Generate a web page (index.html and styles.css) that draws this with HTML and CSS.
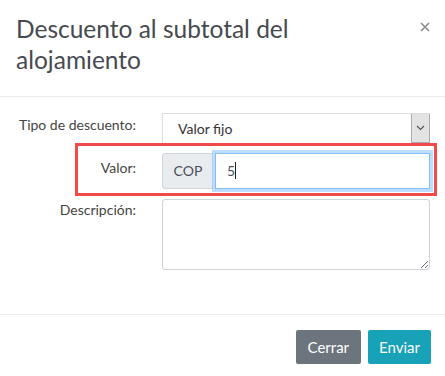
FILE: index.html
```html
<!DOCTYPE html>
<html lang="es">
<head>
    <meta charset="UTF-8">
    <meta name="viewport" content="width=device-width, initial-scale=1.0">
    <title>Descuento al subtotal del alojamiento</title>
    <link rel="stylesheet" href="styles.css">
</head>
<body>
    <div class="modal">
        <header class="modal-header">
            <h5 class="modal-title">Descuento al subtotal del alojamiento</h5>
            <button class="close" type="button" aria-label="Cerrar">
                <svg width="10" height="10" viewBox="0 0 10 10"><path d="M1 1L9 9M9 1L1 9" stroke="#8a8a8a" stroke-width="1.6"/></svg>
            </button>
        </header>
        <main class="modal-body">
            <div class="form-row">
                <label>Tipo de descuento:</label>
                <div class="select">
                    <span class="select-value">Valor fijo</span>
                    <span class="select-arrow">
                        <svg width="9" height="6" viewBox="0 0 9 6"><path d="M1 1L4.5 4.5L8 1" fill="none" stroke="#555" stroke-width="1.2"/></svg>
                    </span>
                </div>
            </div>
            <div class="form-row">
                <label class="label-mid">Valor:</label>
                <div class="input-group">
                    <span class="addon">COP</span>
                    <div class="form-control focused">5<span class="caret"></span></div>
                </div>
            </div>
            <div class="form-row">
                <label>Descripción:</label>
                <textarea class="textarea"></textarea>
            </div>
            <div class="highlight"></div>
        </main>
        <footer class="modal-footer">
            <button class="btn btn-secondary" type="button">Cerrar</button>
            <button class="btn btn-info" type="button">Enviar</button>
        </footer>
    </div>
</body>
</html>
```

FILE: styles.css
```css
body {
    margin: 0;
    font-family: Lato, "Open Sans", sans-serif;
    background: #fff;
    color: #495057;
}
.modal {
    width: 445px;
    height: 376px;
    background: #fff;
    display: flex;
    flex-direction: column;
}
.modal-header {
    display: flex;
    justify-content: space-between;
    align-items: flex-start;
    padding: 13px 14px 21px 16px;
    border-bottom: 1px solid #e9ecef;
}
.modal-title {
    margin: 0;
    width: 330px;
    font-size: 24.5px;
    font-weight: 400;
    line-height: 31px;
    color: #464a4f;
}
.close {
    border: 0;
    background: none;
    padding: 0;
    margin-top: 8px;
    width: 12px;
    height: 12px;
    line-height: 0;
}
.modal-body {
    position: relative;
    padding: 16px 15px 0 16px;
    height: 201px;
    display: flex;
    flex-direction: column;
    gap: 9px;
}
.form-row {
    display: grid;
    grid-template-columns: 120px 268px;
    column-gap: 26px;
    align-items: start;
}
label {
    font-size: 14px;
    line-height: 21px;
    text-align: right;
    color: #444;
    padding-top: 1px;
}
.label-mid {
    padding-top: 4px;
}
.select {
    display: flex;
    height: 31px;
    box-sizing: border-box;
    border: 1px solid #dcdcdc;
    border-right: 0;
    background: #fff;
}
.select-value {
    flex: 1;
    padding-left: 15px;
    font-size: 14px;
    line-height: 30px;
    color: #333;
}
.select-arrow {
    width: 17px;
    background: #e3e3e3;
    border: 1px solid #ababab;
    border-top: 0;
    display: flex;
    align-items: center;
    justify-content: center;
}
.input-group {
    display: flex;
    height: 36px;
}
.addon {
    width: 51px;
    box-sizing: border-box;
    border: 1px solid #ced4da;
    border-right: 0;
    border-radius: 4px 0 0 4px;
    background: #e9ecef;
    font-size: 14px;
    line-height: 34px;
    text-align: center;
    color: #495057;
}
.form-control {
    flex: 1;
    box-sizing: border-box;
    border: 1px solid #80bdff;
    background: #fff;
    padding-left: 11px;
    font-size: 14px;
    line-height: 34px;
    color: #495057;
}
.focused {
    margin-left: 2px;
    box-shadow: 0 0 0 3px rgba(0, 123, 255, 0.25);
    position: relative;
    z-index: 1;
}
.caret {
    display: inline-block;
    width: 1px;
    height: 17px;
    background: #222;
    vertical-align: -3px;
}
.textarea {
    height: 71px;
    box-sizing: border-box;
    border: 1px solid #ced4da;
    border-radius: 3px;
    margin: 1px 0 0;
    font-family: inherit;
}
.highlight {
    position: absolute;
    left: 75px;
    top: 46px;
    width: 356px;
    height: 47px;
    border: 3px solid #f04a4a;
}
.modal-footer {
    border-top: 1px solid #e9ecef;
    display: flex;
    justify-content: flex-end;
    gap: 7px;
    padding: 15px 14px 0 0;
}
.btn {
    border: 0;
    border-radius: 2px;
    height: 34px;
    padding: 0 12px;
    font-family: inherit;
    font-size: 15px;
    color: #fff;
}
.btn-secondary {
    background: #6c757d;
}
.btn-info {
    background: #17a2b8;
    padding: 0 11px;
}
```
